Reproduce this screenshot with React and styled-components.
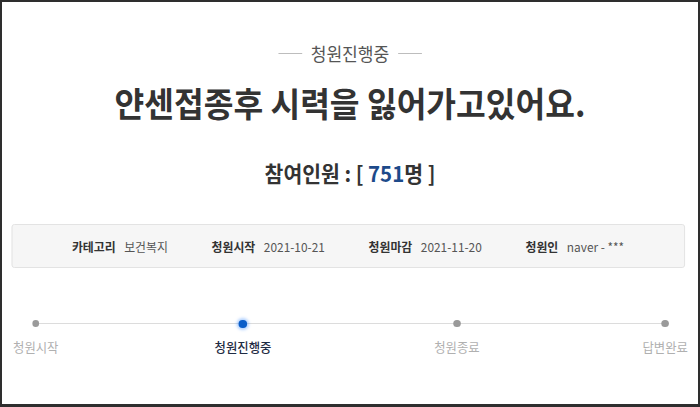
import React from "react";
import styled, { createGlobalStyle } from "styled-components";

const GlobalStyle = createGlobalStyle`
  html, body { margin: 0; padding: 0; background: #fff; }
  body { font-family: "Noto Sans CJK KR", "Noto Sans", sans-serif; }
`;

const Frame = styled.div`
  width: 700px;
  height: 407px;
  box-sizing: border-box;
  border: 2px solid #2e2e2e;
  border-bottom-width: 3px;
  background: #fff;
  overflow: hidden;
`;

/* the screenshot is slightly condensed horizontally; the stage reproduces that */
const Stage = styled.div`
  width: 732.6px;
  transform: scaleX(0.95);
  transform-origin: 0 0;
  display: flex;
  flex-direction: column;
  align-items: center;
`;

const Status = styled.div`
  margin-top: 39px;
  display: flex;
  align-items: center;
  gap: 9px;
  font-size: 18px;
  line-height: 24px;
  color: #555;
  &::before,
  &::after {
    content: "";
    width: 25px;
    height: 1px;
    background: #bdbdbd;
  }
`;

const Title = styled.h1`
  margin: 16px 0 0;
  font-size: 34px;
  line-height: 44px;
  font-weight: 700;
  color: #333;
`;

const Count = styled.div`
  margin-top: 33px;
  font-size: 21.5px;
  line-height: 30px;
  font-weight: 700;
  color: #333;
`;

const Num = styled.span`
  color: #1d4a8a;
`;

const InfoBox = styled.div`
  margin: 36px 13.6px 0 9.5px;
  align-self: stretch;
  height: 44px;
  box-sizing: border-box;
  border: 1px solid #e2e2e2;
  border-radius: 3px;
  background: #f6f6f6;
  display: flex;
  align-items: center;
  justify-content: center;
  gap: 46px;
  font-size: 12.5px;
`;

const InfoItem = styled.div`
  display: flex;
  align-items: center;
  gap: 9px;
`;

const InfoLabel = styled.span`
  font-weight: 700;
  color: #333;
`;

const InfoValue = styled.span`
  color: #555;
`;

const Progress = styled.div`
  margin-top: 49px;
  align-self: stretch;
  padding: 0 10.6px 0 11.6px;
`;

const Steps = styled.div`
  position: relative;
  display: flex;
  justify-content: space-between;
  &::before {
    content: "";
    position: absolute;
    top: 6px;
    left: 23px;
    right: 24px;
    height: 1px;
    background: #dcdcdc;
  }
`;

const Step = styled.div`
  position: relative;
  display: flex;
  flex-direction: column;
  align-items: center;
  margin-left: ${(p) => p.$shift || 0}px;
`;

const DotBox = styled.div`
  height: 13px;
  display: flex;
  align-items: center;
  justify-content: center;
`;

const Dot = styled.span`
  width: ${(p) => (p.$active ? 8.5 : 7.4)}px;
  height: ${(p) => (p.$active ? 8 : 7)}px;
  border-radius: 50%;
  background: ${(p) => (p.$active ? "#0b5ec9" : "#9a9a9a")};
  box-shadow: ${(p) =>
    p.$active ? "0 0 3px 2px rgba(40, 130, 255, 0.35)" : "none"};
`;

const StepLabel = styled.span`
  margin-top: 7px;
  font-size: 13px;
  line-height: 20px;
  color: ${(p) => (p.$active ? "#1f2c44" : "#b0b0b0")};
  font-weight: ${(p) => (p.$active ? 500 : 400)};
`;

const info = [
  ["카테고리", "보건복지"],
  ["청원시작", "2021-10-21"],
  ["청원마감", "2021-11-20"],
  ["청원인", "naver - ***"],
];

const steps = ["청원시작", "청원진행중", "청원종료", "답변완료"];

export default function App() {
  return (
    <>
      <GlobalStyle />
      <Frame>
        <Stage>
          <Status>청원진행중</Status>
          <Title>얀센접종후 시력을 잃어가고있어요.</Title>
          <Count>
            참여인원 : [ <Num>751</Num>명 ]
          </Count>
          <InfoBox>
            {info.map(([k, v]) => (
              <InfoItem key={k}>
                <InfoLabel>{k}</InfoLabel>
                <InfoValue>{v}</InfoValue>
              </InfoItem>
            ))}
          </InfoBox>
          <Progress>
            <Steps>
              {steps.map((s, i) => (
                <Step key={s} $shift={i === 1 ? -7 : 0}>
                  <DotBox>
                    <Dot $active={i === 1} />
                  </DotBox>
                  <StepLabel $active={i === 1}>{s}</StepLabel>
                </Step>
              ))}
            </Steps>
          </Progress>
        </Stage>
      </Frame>
    </>
  );
}
